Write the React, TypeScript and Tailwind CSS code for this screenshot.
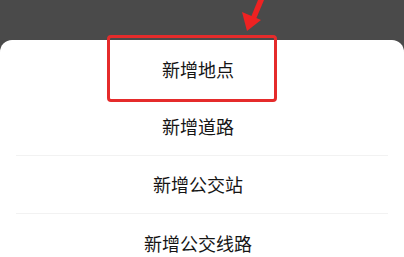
import React from "react";

const items = ["新增地点", "新增道路", "新增公交站", "新增公交线路"];

export default function App() {
  return (
    <div
      className="relative w-[404px] h-[257px] overflow-hidden bg-[#4a4a4a]"
      style={{ fontFamily: '"Noto Sans CJK SC", "Noto Sans", sans-serif' }}
    >
      <div className="h-[40px]" />
      <div className="bg-white rounded-t-[12px] flex flex-col">
        {items.map((t, i) => (
          <div key={t} className="px-4">
            <div
              className={
                "h-[58px] flex items-center justify-center pr-2 text-[18px] text-[#151515] " +
                (i === 1 || i === 2 ? "border-b border-[#f2f2f2]" : "")
              }
            >
              {t}
            </div>
          </div>
        ))}
      </div>
      <div className="absolute left-[107px] top-[35px] w-[170px] h-[67px] border-[3px] border-[#e52b2b] rounded-[4px]" />
      <svg className="absolute left-0 top-0" width="404" height="40" viewBox="0 0 404 40">
        <polygon points="258,0 264,0 256,19 251,17" fill="#ee2222" />
        <polygon points="242,12 261,20 247,31" fill="#ee2222" />
      </svg>
    </div>
  );
}
